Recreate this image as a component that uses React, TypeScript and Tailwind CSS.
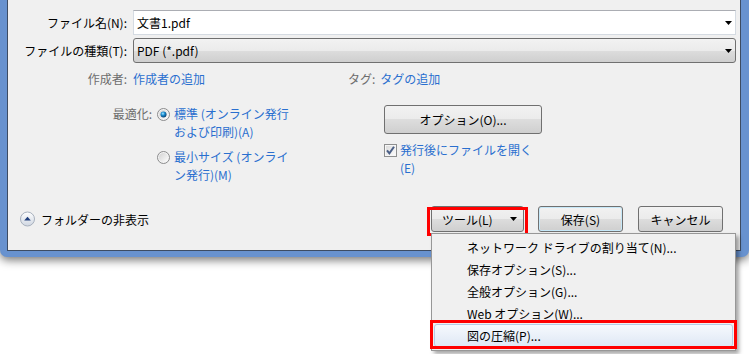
import React from 'react'

const BTN =
  'bg-[linear-gradient(#f2f2f2_0%,#ebebeb_50%,#dddddd_50%,#cfcfcf_100%)] border border-[#707070] rounded-[3px] text-black'

function Arrow() {
  return (
    <svg width="7" height="4" viewBox="0 0 7 4">
      <path d="M0 0h7L3.5 4z" fill="#000" />
    </svg>
  )
}

function Radio({ checked }: { checked?: boolean }) {
  return (
    <svg width="13" height="13" viewBox="0 0 13 13" className="shrink-0">
      <defs>
        <linearGradient id="rOuter" x1="0" y1="0" x2="1" y2="1">
          <stop offset="0" stopColor="#d2d2d2" />
          <stop offset="1" stopColor="#fdfdfd" />
        </linearGradient>
        <radialGradient id="rDot" cx="40%" cy="35%" r="65%">
          <stop offset="0" stopColor="#a8e8ff" />
          <stop offset="0.45" stopColor="#1b8ed2" />
          <stop offset="1" stopColor="#0a3f6e" />
        </radialGradient>
      </defs>
      <circle cx="6.5" cy="6.5" r="6" fill="#f4f4f4" stroke="#8a8b8c" />
      <circle cx="6.5" cy="6.5" r="4.6" fill="url(#rOuter)" />
      {checked && <circle cx="6.5" cy="6.5" r="3" fill="url(#rDot)" />}
    </svg>
  )
}

function Check() {
  return (
    <svg width="13" height="13" viewBox="0 0 13 13" className="shrink-0">
      <defs>
        <linearGradient id="cb" x1="0" y1="0" x2="1" y2="1">
          <stop offset="0" stopColor="#dcdcdc" />
          <stop offset="1" stopColor="#fbfbfb" />
        </linearGradient>
      </defs>
      <rect x="0.5" y="0.5" width="12" height="12" fill="#f6f6f6" stroke="#8e8f8f" />
      <rect x="2" y="2" width="9" height="9" fill="url(#cb)" />
      <path d="M3 6.3 5.4 9.4 10 2.8" fill="none" stroke="#4b5f86" strokeWidth="2" />
    </svg>
  )
}

function FolderToggle() {
  return (
    <svg width="15" height="16" viewBox="0 0 15 16" className="shrink-0">
      <defs>
        <linearGradient id="ft" x1="0" y1="0" x2="0" y2="1">
          <stop offset="0" stopColor="#ffffff" />
          <stop offset="1" stopColor="#cfd6e1" />
        </linearGradient>
      </defs>
      <circle cx="7.5" cy="8" r="7" fill="url(#ft)" stroke="#a7b0bd" />
      <path d="M4.2 9.6h6.6L7.5 5.8z" fill="#213f7c" />
    </svg>
  )
}

const MENU = [
  'ネットワーク ドライブの割り当て(N)...',
  '保存オプション(S)...',
  '全般オプション(G)...',
  'Web オプション(W)...',
  '図の圧縮(P)...',
]

export default function App() {
  return (
    <div className="relative w-[749px] h-[354px] bg-white overflow-hidden font-['Noto_Sans_CJK_JP','Noto_Sans',sans-serif] text-[12px] leading-[17px]">
      {/* window frame */}
      <div className="w-[749px] h-[257px] bg-[#6892cf] pl-[7px] pr-[8px] pb-[6px] rounded-b-[7px] shadow-[0_3px_10px_rgba(0,0,0,0.55)]">
        <div className="flex flex-col h-[251px] bg-[#f0f0f0] border-l border-r border-b border-[#3d4c63]">
          {/* file name */}
          <div className="flex items-center mt-[10px] h-[25px]">
            <div className="w-[119px] text-right text-black">ファイル名(N):</div>
            <div className="flex-1 ml-[6px] mr-[4px] h-[25px] flex items-center justify-between bg-white border border-[#d5dbe2] border-t-[#abadb3] pl-[3px] pr-[3px]">
              <span className="text-black">文書1.pdf</span>
              <Arrow />
            </div>
          </div>
          {/* file type */}
          <div className="flex items-center mt-[3px] h-[25px]">
            <div className="w-[119px] text-right text-black">ファイルの種類(T):</div>
            <div className={`flex-1 ml-[6px] mr-[4px] h-[25px] flex items-center justify-between pl-[3px] pr-[3px] ${BTN}`}>
              <span className="text-black">PDF (*.pdf)</span>
              <Arrow />
            </div>
          </div>
          {/* author / tags */}
          <div className="flex items-center mt-[7px] h-[17px]">
            <div className="w-[119px] text-right text-[#6d6d6d]">作成者:</div>
            <div className="ml-[6px] w-[215px] text-[#2a6fcf]">作成者の追加</div>
            <div className="text-[#6d6d6d]">タグ:</div>
            <div className="ml-[5px] text-[#2a6fcf]">タグの追加</div>
          </div>
          {/* optimize + options */}
          <div className="flex mt-[18px]">
            <div className="flex w-[376px]">
              <div className="w-[144px] text-right text-[#6d6d6d] leading-[18px]">最適化:</div>
              <div className="ml-[5px] flex flex-col">
                <div className="flex items-start">
                  <div className="mt-[3px]"><Radio checked /></div>
                  <div className="ml-[4px] leading-[18px] text-[#2a6fcf]">
                    標準 (オンライン発行<br />および印刷)(A)
                  </div>
                </div>
                <div className="flex items-start mt-[7px]">
                  <div className="mt-[3px]"><Radio /></div>
                  <div className="ml-[4px] leading-[18px] text-[#2a6fcf]">
                    最小サイズ (オンライ<br />ン発行)(M)
                  </div>
                </div>
              </div>
            </div>
            <div className="flex flex-col">
              <button className={`w-[158px] h-[29px] flex items-center justify-center ${BTN}`}>オプション(O)...</button>
              <div className="flex items-start mt-[7px]">
                <div className="mt-[3px]"><Check /></div>
                <div className="ml-[3px] leading-[18px] text-[#2a6fcf]">
                  発行後にファイルを開く<br />(E)
                </div>
              </div>
            </div>
          </div>
          {/* footer */}
          <div className="mt-auto mb-[18px] h-[26px] flex items-center pl-[12px] pr-[17px]">
            <FolderToggle />
            <span className="ml-[6px] text-black">フォルダーの非表示</span>
            <div className="ml-auto flex items-center">
              <div className="relative">
                <button className={`w-[93px] h-[26px] flex items-center justify-between pl-[10px] pr-[6px] ${BTN}`}>
                  <span>ツール(L)</span>
                  <Arrow />
                </button>
                <div className="absolute left-[-4px] right-[-4px] top-[1px] bottom-[-4px] border-[3px] border-[#f00]" />
              </div>
              <button className={`ml-[14px] w-[85px] h-[26px] flex items-center justify-center ${BTN} border-[#3c7fb1] shadow-[inset_0_0_0_1px_#c6e8f8]`}>
                保存(S)
              </button>
              <button className={`ml-[15px] w-[85px] h-[26px] flex items-center justify-center ${BTN}`}>キャンセル</button>
            </div>
          </div>
        </div>
      </div>

      {/* tools dropdown menu */}
      <div className="absolute left-[431px] top-[233px] w-[305px] bg-[#f0f0f0] border border-[#979797] pt-[3px] pb-[3px] shadow-[3px_3px_4px_rgba(0,0,0,0.35)]">
        {MENU.map((label, i) => (
          <div key={label} className="relative h-[22px] flex items-center pb-[2px]">
            {i === MENU.length - 1 && (
              <div className="absolute left-[2px] right-[2px] top-[-1px] bottom-[0px] rounded-[3px] border border-[#b6cbe6] bg-[linear-gradient(#f6f9fd,#dfe8f5)]" />
            )}
            <span className="relative pl-[35px] text-black">{label}</span>
          </div>
        ))}
        <div className="absolute left-[-2px] right-[-2px] top-[86px] h-[29px] border-[3px] border-[#f00]" />
      </div>
    </div>
  )
}
